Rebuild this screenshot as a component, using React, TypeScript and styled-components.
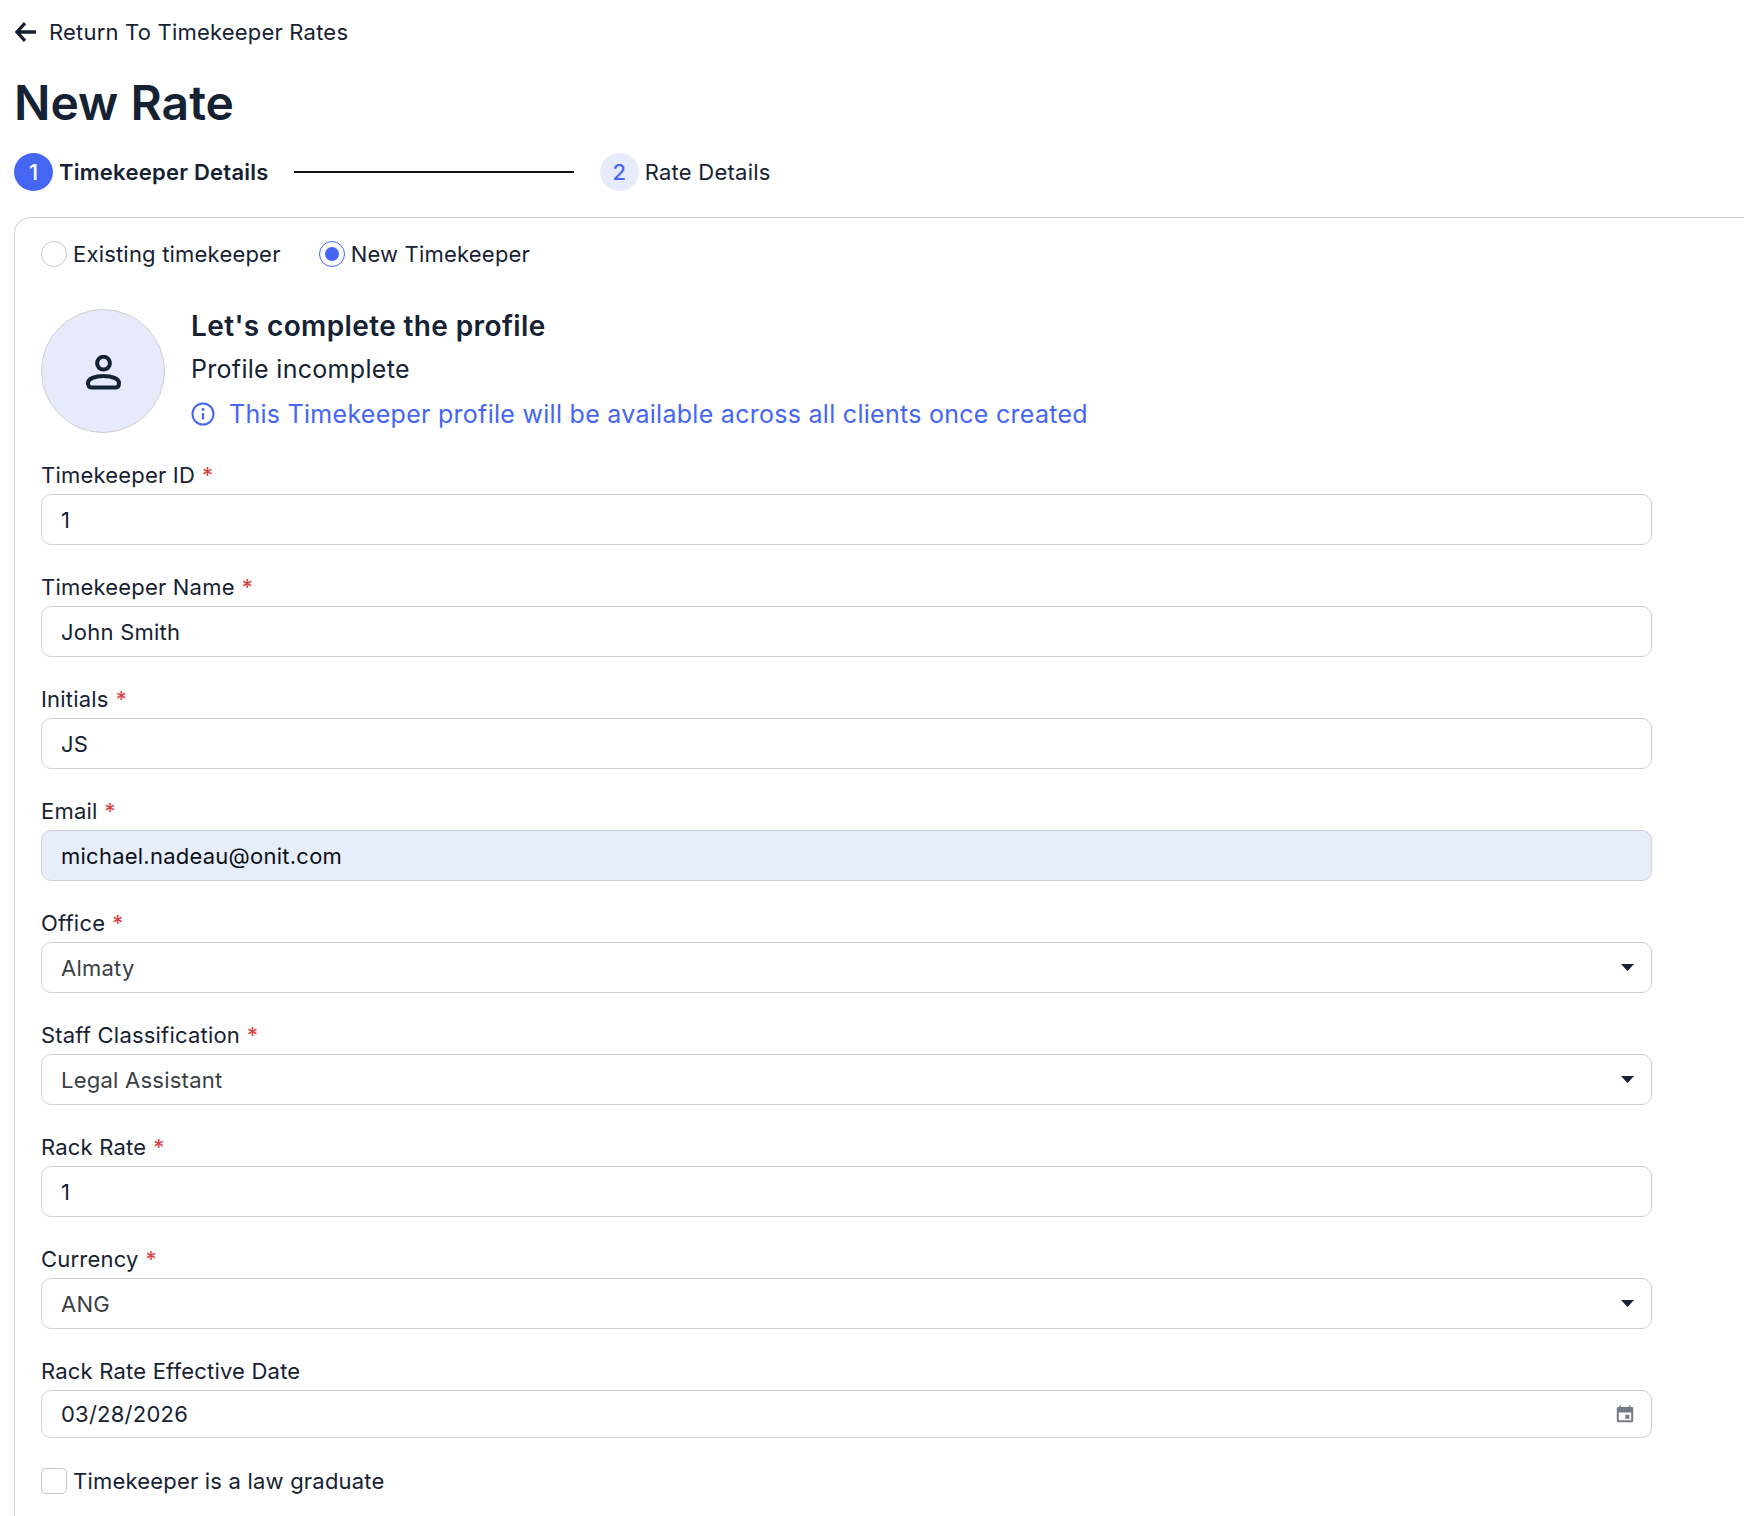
import React from "react";
import styled, { createGlobalStyle } from "styled-components";

const Global = createGlobalStyle`
  html, body { margin: 0; padding: 0; background: #fff; }
  body { height: 1516px; overflow: hidden; font-family: Inter, "Liberation Sans", sans-serif; color: #152233; }
  * { box-sizing: border-box; }
`;

const Page = styled.div`
  height: 1516px;
  overflow: hidden;
  padding-left: 14px;
`;

const BackLink = styled.a`
  display: flex;
  align-items: center;
  gap: 13px;
  height: 32px;
  margin-top: 16px;
  font-size: 22px;
  line-height: 32px;
  letter-spacing: 0.2px;
  color: #152233;
`;

const Title = styled.h1`
  margin: 23px 0 0 0;
  font-size: 48px;
  line-height: 64px;
  font-weight: 600;
  color: #152233;
`;

const Stepper = styled.div`
  display: flex;
  align-items: center;
  margin-top: 18px;
  height: 38px;
`;

const StepBadge = styled.span<{ $active?: boolean }>`
  width: 39px;
  height: 38px;
  border-radius: 50%;
  margin-right: 6px;
  display: flex;
  align-items: center;
  justify-content: center;
  font-size: 22px;
  font-weight: 500;
  background: ${(p) => (p.$active ? "#4466f2" : "#e6eafb")};
  color: ${(p) => (p.$active ? "#fff" : "#4466f2")};
`;

const StepLabel = styled.span<{ $active?: boolean }>`
  font-size: 22px;
  letter-spacing: 0.25px;
  font-weight: ${(p) => (p.$active ? 600 : 400)};
  color: #152233;
`;

const StepLine = styled.span`
  width: 280px;
  height: 2px;
  background: #111;
  margin: 0 26px 0 25px;
`;

const Card = styled.div`
  margin-top: 26px;
  margin-right: -40px;
  border: 1px solid #cfd0d2;
  border-radius: 16px;
  padding: 23px 26px;
  height: 1400px;
`;

const RadioRow = styled.div`
  display: flex;
  align-items: center;
  gap: 38px;
  height: 26px;
`;

const Choice = styled.label`
  display: flex;
  align-items: center;
  gap: 6px;
  font-size: 22px;
  letter-spacing: 0.2px;
  color: #152233;
`;

const Radio = styled.span<{ $on?: boolean }>`
  width: 26px;
  height: 26px;
  border-radius: 50%;
  border: 1px solid ${(p) => (p.$on ? "#4466f2" : "#c4c6c9")};
  display: flex;
  align-items: center;
  justify-content: center;
  &::after {
    content: "";
    display: ${(p) => (p.$on ? "block" : "none")};
    width: 14px;
    height: 14px;
    border-radius: 50%;
    background: #4466f2;
  }
`;

const Profile = styled.div`
  display: flex;
  margin-top: 42px;
  gap: 26px;
`;

const Avatar = styled.div`
  width: 124px;
  height: 124px;
  border-radius: 50%;
  background: #e6eafb;
  border: 1px solid #cfd0d2;
  display: flex;
  align-items: center;
  justify-content: center;
  flex: none;
`;

const ProfileText = styled.div`
  display: flex;
  flex-direction: column;
`;

const ProfileTitle = styled.div`
  font-size: 28px;
  line-height: 34px;
  letter-spacing: 0.38px;
  font-weight: 600;
  color: #152233;
`;

const ProfileSub = styled.div`
  margin-top: 9px;
  font-size: 25px;
  line-height: 34px;
  letter-spacing: 0.3px;
  color: #152233;
`;

const Info = styled.div`
  margin-top: 11px;
  display: flex;
  align-items: center;
  gap: 14px;
  font-size: 25px;
  line-height: 34px;
  letter-spacing: 0.28px;
  color: #4466f2;
`;

const Form = styled.div`
  width: 1611px;
  margin-top: 26px;
`;

const Field = styled.div`
  height: 112px;
`;

const Label = styled.div`
  font-size: 22px;
  line-height: 32px;
  letter-spacing: 0.2px;
  color: #152233;
  height: 35px;
`;

const Req = styled.span`
  color: #e23a3a;
  margin-left: 7px;
`;

const Control = styled.div<{ $filled?: boolean; $muted?: boolean; $short?: boolean }>`
  height: ${(p) => (p.$short ? "48px" : "51px")};
  border: 1px solid #cfd0d2;
  border-radius: 10px;
  padding: 0 19px;
  display: flex;
  align-items: center;
  justify-content: space-between;
  font-size: 22px;
  letter-spacing: 0.24px;
  background: ${(p) => (p.$filled ? "#e7eefb" : "#fff")};
  color: ${(p) => (p.$filled ? "#0c0f14" : p.$muted ? "#3a3f45" : "#152233")};
`;

const CheckRow = styled.label`
  display: flex;
  align-items: center;
  gap: 6px;
  margin-top: 1px;
  font-size: 22px;
  letter-spacing: 0.2px;
  color: #152233;
`;

const Check = styled.span`
  width: 26px;
  height: 26px;
  border: 1px solid #c4c6c9;
  border-radius: 5px;
`;

const CaretSvg = styled.svg`
  margin-right: -2px;
`;

const CalendarSvg = styled.svg`
  margin-right: -2px;
`;

const PersonSvg = styled.svg`
  margin-top: 3px;
`;

const Caret = () => (
  <CaretSvg width="13" height="7" viewBox="0 0 13 7" aria-hidden>
    <path d="M0 0h13L6.500 7z" fill="#152233" />
  </CaretSvg>
);

const CalendarIcon = () => (
  <CalendarSvg width="18" height="18" viewBox="0 0 18 18" aria-hidden>
    <path
      fillRule="evenodd"
      d="M3.500 0.500h1.600v1.500h7.800V0.500h1.600V2h1.300c.9 0 1.400.6 1.400 1.400v12.400c0 .8-.5 1.400-1.400 1.400H2.200c-.9 0-1.400-.6-1.400-1.400V3.400C.8 2.600 1.300 2 2.200 2h1.300zM2.800 7.500v7.800h12.400V7.500z"
      fill="#737b85"
    />
    <rect x="9.300" y="9.800" width="4" height="4" fill="#737b85" />
  </CalendarSvg>
);

const BackArrow = () => (
  <svg width="22" height="22" viewBox="0 0 22 22" aria-hidden>
    <path d="M11 2.200 3 11l8 8.800M3.200 11H22" fill="none" stroke="#152233" strokeWidth="3.300" />
  </svg>
);

const PersonIcon = () => (
  <PersonSvg width="35" height="35" viewBox="0 0 35 35" aria-hidden>
    <circle cx="17.500" cy="8.200" r="6.400" fill="none" stroke="#152233" strokeWidth="4" />
    <path
      d="M2 28c0-4.200 7-7 15.500-7S33 23.800 33 28c0 2.800-1.200 4.500-3.200 4.500H5.200C3.200 32.500 2 30.800 2 28z"
      fill="none"
      stroke="#152233"
      strokeWidth="4"
    />
  </PersonSvg>
);

const InfoIcon = () => (
  <svg width="24" height="24" viewBox="0 0 24 24" aria-hidden>
    <circle cx="12" cy="12" r="10.500" fill="none" stroke="#4466f2" strokeWidth="2" />
    <path d="M12 11v6.500" stroke="#4466f2" strokeWidth="2.200" />
    <circle cx="12" cy="7.500" r="1.400" fill="#4466f2" />
  </svg>
);

type Row = {
  label: string;
  value: string;
  required?: boolean;
  kind?: "text" | "select" | "date";
  filled?: boolean;
};

const rows: Row[] = [
  { label: "Timekeeper ID", value: "1", required: true },
  { label: "Timekeeper Name", value: "John Smith", required: true },
  { label: "Initials", value: "JS", required: true },
  { label: "Email", value: "michael.nadeau@onit.com", required: true, filled: true },
  { label: "Office", value: "Almaty", required: true, kind: "select" },
  { label: "Staff Classification", value: "Legal Assistant", required: true, kind: "select" },
  { label: "Rack Rate", value: "1", required: true },
  { label: "Currency", value: "ANG", required: true, kind: "select" },
  { label: "Rack Rate Effective Date", value: "03/28/2026", kind: "date" },
];

export default function App() {
  return (
    <Page>
      <Global />
      <BackLink>
        <BackArrow />
        Return To Timekeeper Rates
      </BackLink>
      <Title>New Rate</Title>
      <Stepper>
        <StepBadge $active>1</StepBadge>
        <StepLabel $active>Timekeeper Details</StepLabel>
        <StepLine />
        <StepBadge>2</StepBadge>
        <StepLabel>Rate Details</StepLabel>
      </Stepper>
      <Card>
        <RadioRow>
          <Choice>
            <Radio />
            Existing timekeeper
          </Choice>
          <Choice>
            <Radio $on />
            New Timekeeper
          </Choice>
        </RadioRow>
        <Profile>
          <Avatar>
            <PersonIcon />
          </Avatar>
          <ProfileText>
            <ProfileTitle>Let's complete the profile</ProfileTitle>
            <ProfileSub>Profile incomplete</ProfileSub>
            <Info>
              <InfoIcon />
              This Timekeeper profile will be available across all clients once created
            </Info>
          </ProfileText>
        </Profile>
        <Form>
          {rows.map((r) => (
            <Field key={r.label}>
              <Label>
                {r.label}
                {r.required && <Req>*</Req>}
              </Label>
              <Control $filled={r.filled} $muted={r.kind === "select"} $short={r.kind === "date"}>
                {r.value}
                {r.kind === "select" && <Caret />}
                {r.kind === "date" && <CalendarIcon />}
              </Control>
            </Field>
          ))}
          <CheckRow>
            <Check />
            Timekeeper is a law graduate
          </CheckRow>
        </Form>
      </Card>
    </Page>
  );
}
